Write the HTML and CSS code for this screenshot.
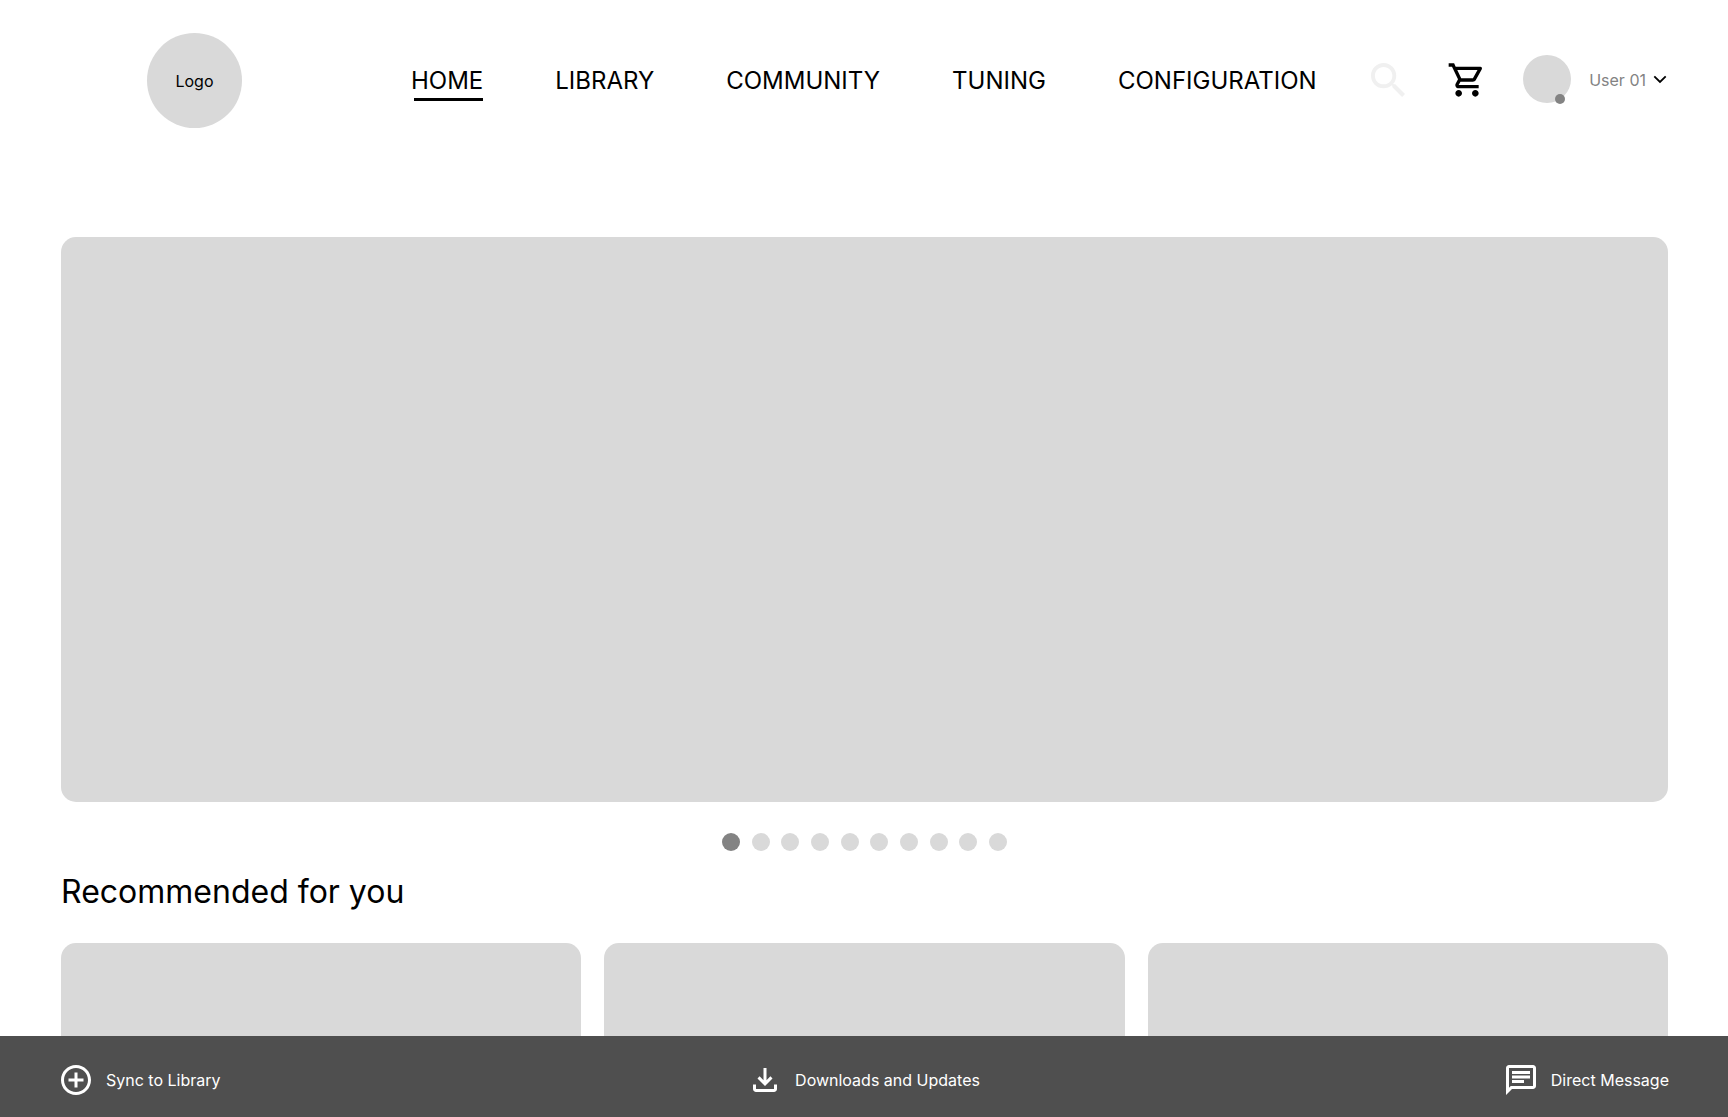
FILE: index.html
```html
<!DOCTYPE html>
<html lang="en">
<head>
<meta charset="utf-8">
<meta name="viewport" content="width=device-width, initial-scale=1">
<title>Home</title>
<link rel="stylesheet" href="styles.css">
</head>
<body>
<div class="page">
  <header class="header">
    <a class="logo" href="#">Logo</a>
    <nav class="nav">
      <a class="nav-link is-active" href="#">HOME</a>
      <a class="nav-link" href="#">LIBRARY</a>
      <a class="nav-link" href="#">COMMUNITY</a>
      <a class="nav-link" href="#">TUNING</a>
      <a class="nav-link" href="#">CONFIGURATION</a>
    </nav>
    <div class="tools">
      <button class="search" type="button" aria-label="Search">
        <svg width="34" height="34" viewBox="3 3 17.5 17.5"><path fill="currentColor" d="M15.5 14h-.79l-.28-.27C15.41 12.59 16 11.11 16 9.5 16 5.91 13.09 3 9.5 3S3 5.91 3 9.5 5.91 16 9.5 16c1.61 0 3.09-.59 4.23-1.57l.27.28v.79l5 4.99L20.49 19l-4.99-5zm-6 0C7.01 14 5 11.99 5 9.5S7.01 5 9.5 5 14 7.01 14 9.5 11.99 14 9.5 14z"/></svg>
      </button>
      <button class="cart" type="button" aria-label="Cart">
        <svg width="40" height="40" viewBox="0 0 24 24"><path fill="currentColor" d="M15.55 13c.75 0 1.41-.41 1.75-1.03l3.58-6.49c.37-.66-.11-1.48-.87-1.48H5.21l-.94-2H1v2h2l3.6 7.59-1.35 2.44C4.52 15.37 5.48 17 7 17h12v-2H7l1.1-2h7.45zM6.16 6h12.15l-2.76 5H8.53L6.16 6zM7 18c-1.1 0-1.99.9-1.99 2S5.9 22 7 22s2-.9 2-2-.9-2-2-2zm10 0c-1.1 0-1.99.9-1.99 2s.89 2 1.99 2 2-.9 2-2-.9-2-2-2z"/></svg>
      </button>
      <button class="user" type="button">
        <span class="avatar"><span class="status"></span></span>
        <span class="user-name">User 01</span>
        <svg width="14" height="10" viewBox="0 0 14 10"><path d="M1.300 1.300 7 7l5.700-5.700" fill="none" stroke="#000" stroke-width="1.800"/></svg>
      </button>
    </div>
  </header>
  <main class="main">
    <section class="hero" aria-label="Featured"></section>
    <div class="dots">
      <button class="dot is-current" type="button" aria-label="Slide 1"></button>
      <button class="dot" type="button" aria-label="Slide 2"></button>
      <button class="dot" type="button" aria-label="Slide 3"></button>
      <button class="dot" type="button" aria-label="Slide 4"></button>
      <button class="dot" type="button" aria-label="Slide 5"></button>
      <button class="dot" type="button" aria-label="Slide 6"></button>
      <button class="dot" type="button" aria-label="Slide 7"></button>
      <button class="dot" type="button" aria-label="Slide 8"></button>
      <button class="dot" type="button" aria-label="Slide 9"></button>
      <button class="dot" type="button" aria-label="Slide 10"></button>
    </div>
    <h2 class="title">Recommended for you</h2>
    <div class="cards">
      <div class="card"></div>
      <div class="card"></div>
      <div class="card"></div>
    </div>
  </main>
</div>
<footer class="footer">
  <button class="action" type="button">
    <svg width="36" height="36" viewBox="0 0 24 24"><path fill="currentColor" d="M13 7h-2v4H7v2h4v4h2v-4h4v-2h-4V7zm-1-5C6.480 2 2 6.480 2 12s4.480 10 10 10 10-4.480 10-10S17.520 2 12 2zm0 18c-4.410 0-8-3.590-8-8s3.590-8 8-8 8 3.590 8 8-3.590 8-8 8z"/></svg>
    Sync to Library
  </button>
  <button class="action" type="button">
    <svg width="36" height="36" viewBox="0 0 24 24"><path fill="currentColor" d="m12 16-5-5 1.400-1.450 2.600 2.600V4h2v8.150l2.600-2.600L17 11zM6 20q-.825 0-1.412-.587T4 18v-3h2v3h12v-3h2v3q0 .825-.587 1.413T18 20z"/></svg>
    Downloads and Updates
  </button>
  <button class="action" type="button">
    <svg width="36" height="36" viewBox="0 0 24 24"><path fill="currentColor" d="M4 4h16v12H5.170L4 17.170V4m0-2c-1.100 0-1.990.9-1.990 2L2 22l4-4h14c1.100 0 2-.9 2-2V4c0-1.100-.9-2-2-2H4zm2 10h8v2H6v-2zm0-3h12v2H6V9zm0-3h12v2H6V6z"/></svg>
    Direct Message
  </button>
</footer>
</body>
</html>
```
FILE: styles.css
```css
* {
  box-sizing: border-box;
}

body {
  margin: 0;
  height: 100vh;
  display: flex;
  flex-direction: column;
  background: #fff;
  color: #000;
  font-family: Inter, "Liberation Sans", sans-serif;
  font-size: 16px;
  line-height: 20px;
}

button {
  padding: 0;
  border: 0;
  background: none;
  color: inherit;
  font: inherit;
  cursor: pointer;
}

a {
  color: inherit;
  text-decoration: none;
}

svg {
  display: block;
}

.page {
  flex: 1;
  min-height: 0;
  overflow-y: auto;
  scrollbar-width: none;
}

.header {
  display: flex;
  align-items: center;
  padding: 33px 61px 32px 147px;
}

.logo {
  display: flex;
  align-items: center;
  justify-content: center;
  width: 95px;
  height: 95px;
  border-radius: 50%;
  background: #d9d9d9;
}

.nav {
  display: flex;
  gap: 72px;
  margin-left: 169px;
  font-size: 24px;
  line-height: 28px;
}

.nav-link {
  position: relative;
  padding: 8px 0 7px;
}

.nav-link.is-active::after {
  content: "";
  position: absolute;
  left: 3px;
  right: 0;
  bottom: 1px;
  height: 3px;
  background: #000;
}

.tools {
  display: flex;
  align-items: center;
  margin-left: auto;
  margin-bottom: 1px;
}

.search {
  margin-right: 42px;
  color: #f0f0f0;
}

.cart {
  margin-right: 36px;
}

.user {
  display: flex;
  align-items: center;
}

.avatar {
  position: relative;
  width: 48px;
  height: 48px;
  margin: 0 18px 2px 0;
  border-radius: 50%;
  background: #d9d9d9;
}

.status {
  position: absolute;
  right: 6px;
  bottom: -1px;
  width: 10px;
  height: 10px;
  border-radius: 50%;
  background: #838383;
}

.user-name {
  margin-right: 7px;
  color: #838383;
}

.main {
  padding: 77px 60px 24px 61px;
}

.hero {
  height: 565px;
  border-radius: 15px;
  background: #d9d9d9;
}

.dots {
  display: flex;
  justify-content: space-between;
  width: 285px;
  margin: 31px auto 0;
}

.dot {
  width: 18px;
  height: 18px;
  border-radius: 50%;
  background: #d9d9d9;
}

.dot.is-current {
  background: #838383;
}

.title {
  margin: 21px 0 32px;
  font-size: 32px;
  font-weight: 400;
  line-height: 39px;
}

.cards {
  display: grid;
  grid-template-columns: repeat(3, 1fr);
  gap: 23px;
}

.card {
  height: 280px;
  border-radius: 15px;
  background: #d9d9d9;
}

.footer {
  display: grid;
  grid-template-columns: 1fr auto 1fr;
  padding: 26px 59px 19px 58px;
  background: #4f4f4f;
  color: #fff;
}

.action {
  display: flex;
  align-items: center;
  gap: 12px;
}

.action:last-child {
  justify-self: end;
}
```
